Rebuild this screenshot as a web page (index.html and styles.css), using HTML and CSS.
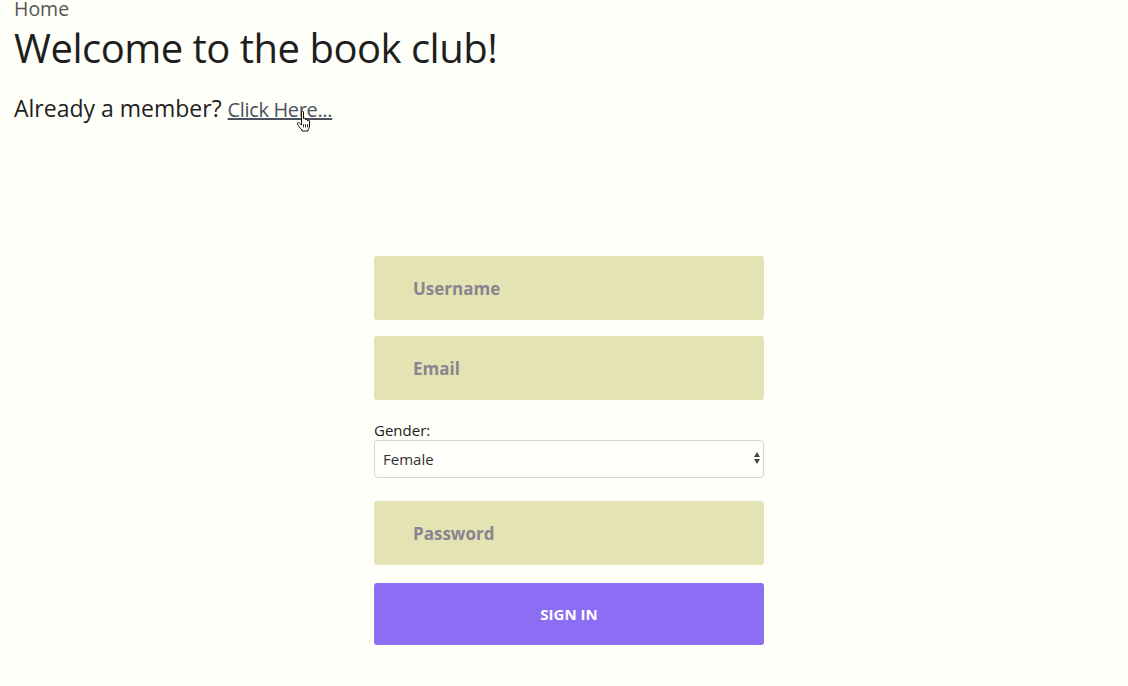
FILE: index.html
```html
<!DOCTYPE html>
<html lang="en">
<head>
<meta charset="utf-8">
<title>Book club</title>
<link rel="stylesheet" href="styles.css">
</head>
<body>
<header class="top">
  <a class="crumb">Home</a>
  <h1 class="title">Welcome to the book club!</h1>
  <p class="member">Already a member? <a class="login-link" href="#">Click Here...</a><svg class="cursor" width="16" height="22" viewBox="0 0 16 22"><path d="M5.5 2C5.5.8 7.5.8 7.5 2V9C7.5 8 9.5 8 9.5 9V10C9.5 9 11.5 9 11.5 10V11C11.5 10 13.5 10 13.5 11V16C13.5 18 12.5 19 12 20V21H6V20C5 19 2.5 16 1.5 14C1 12.8 2.3 12 3.2 12.8L5.5 15Z" fill="#fff" stroke="#111" stroke-width="1" stroke-linejoin="round"/><path d="M7.5 14v3.5M9.5 14v3.5M11.5 14v3.5" stroke="#111" stroke-width=".8"/></svg></p>
</header>
<main class="stage">
  <form class="signup">
    <input class="field" type="text" placeholder="Username">
    <input class="field" type="email" placeholder="Email">
    <label class="gender-label" for="gender">Gender:</label>
    <div class="select-wrap">
      <select id="gender" class="gender">
        <option>Female</option>
        <option>Male</option>
      </select>
    </div>
    <input class="field pw" type="password" placeholder="Password">
    <button class="submit" type="button">SIGN IN</button>
  </form>
</main>
</body>
</html>
```
FILE: styles.css
```css
html, body {
  margin: 0;
  padding: 0;
  background: #fffff9;
}
body {
  font-family: "Open Sans", "Noto Sans", sans-serif;
  color: #222;
  height: 686px;
  overflow: hidden;
}
.top {
  padding: 0 14px;
}
.crumb {
  display: block;
  font-size: 19.5px;
  line-height: 18px;
  margin-top: 0;
  color: #555;
}
.title {
  margin: 7px 0 0;
  font-weight: 400;
  font-size: 40px;
  line-height: 46px;
  color: #1e1e1e;
  letter-spacing: -0.5px;
}
.member {
  margin: 22px 0 0;
  font-size: 23px;
  line-height: 30px;
  color: #1e1e1e;
  position: relative;
  letter-spacing: 0;
}
.login-link {
  font-size: 20px;
  color: #4a5060;
  text-decoration: underline;
  letter-spacing: -0.35px;
}
.cursor {
  position: absolute;
  left: 282px;
  top: 17px;
}
.stage {
  padding-left: 10px;
  padding-top: 131px;
}
.signup {
  width: 390px;
  margin: 0 auto;
  display: flex;
  flex-direction: column;
}
.field {
  box-sizing: border-box;
  height: 64px;
  border: none;
  border-radius: 3px;
  background: #e4e3b4;
  padding: 0 0 0 39px;
  margin: 0 0 16px;
  font-family: inherit;
  font-size: 17px;
  font-weight: 700;
  color: #333;
}
.field::placeholder {
  color: #8a8490;
  opacity: 1;
}
.gender-label {
  margin-top: 4px;
  font-size: 15px;
  line-height: 20px;
  color: #222;
}
.select-wrap {
  position: relative;
  margin-bottom: 23px;
}
.gender {
  appearance: none;
  -webkit-appearance: none;
  box-sizing: border-box;
  width: 100%;
  height: 38px;
  border: 1px solid #d6d6cc;
  border-radius: 4px;
  background: #fffffb;
  padding: 0 8px;
  font-family: inherit;
  font-size: 15px;
  color: #333;
}
.select-wrap::before,
.select-wrap::after {
  content: "";
  position: absolute;
  right: 4px;
  border-left: 3.5px solid transparent;
  border-right: 3.5px solid transparent;
  pointer-events: none;
}
.select-wrap::before {
  top: 12px;
  border-bottom: 5px solid #444;
}
.select-wrap::after {
  top: 19px;
  border-top: 5px solid #444;
}
.pw {
  margin-bottom: 18px;
}
.submit {
  height: 62px;
  border: none;
  border-radius: 3px;
  background: #8c6df3;
  color: #fff;
  font-family: inherit;
  font-weight: 700;
  font-size: 15px;
}
```
